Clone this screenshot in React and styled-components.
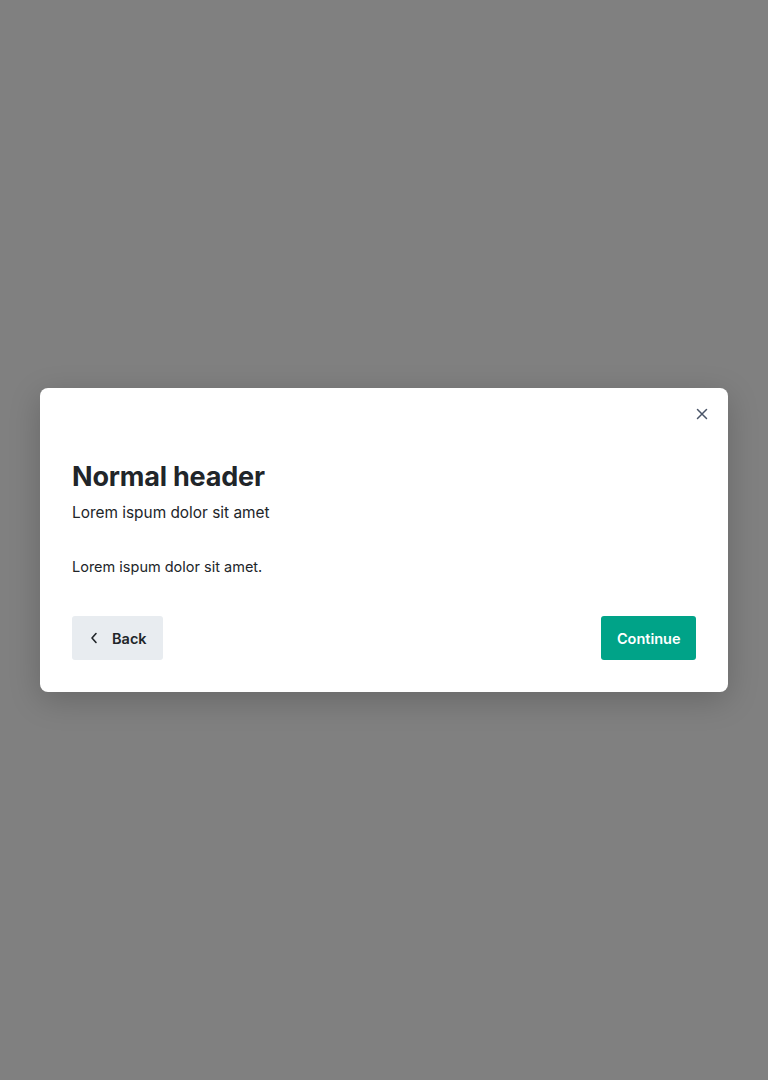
import React from "react";
import styled, { createGlobalStyle } from "styled-components";

const Global = createGlobalStyle`
  html, body { margin: 0; padding: 0; }
  body { font-family: Inter, "Noto Sans", sans-serif; background: #808080; }
  * { box-sizing: border-box; }
`;

const Overlay = styled.div`
  width: 768px;
  height: 1080px;
  background: #808080;
  display: flex;
  align-items: center;
  justify-content: center;
`;

const Modal = styled.div`
  position: relative;
  width: 688px;
  background: #fff;
  border-radius: 8px;
  box-shadow: 0 8px 32px rgba(0, 0, 0, 0.2);
  padding: 72px 32px 32px;
  color: #212529;
`;

const CloseButton = styled.button`
  position: absolute;
  top: 16px;
  right: 16px;
  width: 20px;
  height: 20px;
  border: 0;
  background: none;
  padding: 0;
  display: flex;
  align-items: center;
  justify-content: center;
  color: #4a5568;
  cursor: pointer;
`;

const Title = styled.h1`
  margin: 0;
  font-size: 27px;
  line-height: 34px;
  font-weight: 700;
  color: #212529;
  letter-spacing: -0.2px;
`;

const Subtitle = styled.p`
  margin: 7px 0 0;
  font-size: 15.4px;
  line-height: 24px;
  color: #212529;
`;

const Body = styled.p`
  margin: 31px 0 0;
  font-size: 14.5px;
  line-height: 22px;
  color: #212529;
`;

const Footer = styled.div`
  margin-top: 38px;
  display: flex;
  justify-content: space-between;
  align-items: center;
`;

const Button = styled.button`
  height: 44px;
  border: 0;
  border-radius: 3px;
  font-family: inherit;
  font-size: 14.5px;
  font-weight: 600;
  display: inline-flex;
  align-items: center;
  gap: 14px;
  cursor: pointer;
  padding: ${(p) => (p.$primary ? "0 15.5px" : "0 16px 0 18px")};
  background: ${(p) => (p.$primary ? "#00a388" : "#e8ecf0")};
  color: ${(p) => (p.$primary ? "#fff" : "#212529")};
`;

export default function App() {
  return (
    <>
      <Global />
      <Overlay>
        <Modal>
          <CloseButton aria-label="Close">
            <svg width="12" height="12" viewBox="0 0 12 12" fill="none" stroke="currentColor" strokeWidth="1.5" strokeLinecap="round">
              <path d="M1.5 1.5l9 9M10.5 1.5l-9 9" />
            </svg>
          </CloseButton>
          <Title>Normal header</Title>
          <Subtitle>Lorem ispum dolor sit amet</Subtitle>
          <Body>Lorem ispum dolor sit amet.</Body>
          <Footer>
            <Button>
              <svg width="8" height="12" viewBox="0 0 8 12" fill="none" stroke="currentColor" strokeWidth="1.6" strokeLinecap="round" strokeLinejoin="round">
                <path d="M6 1.5L2 6l4 4.5" />
              </svg>
              Back
            </Button>
            <Button $primary>Continue</Button>
          </Footer>
        </Modal>
      </Overlay>
    </>
  );
}
